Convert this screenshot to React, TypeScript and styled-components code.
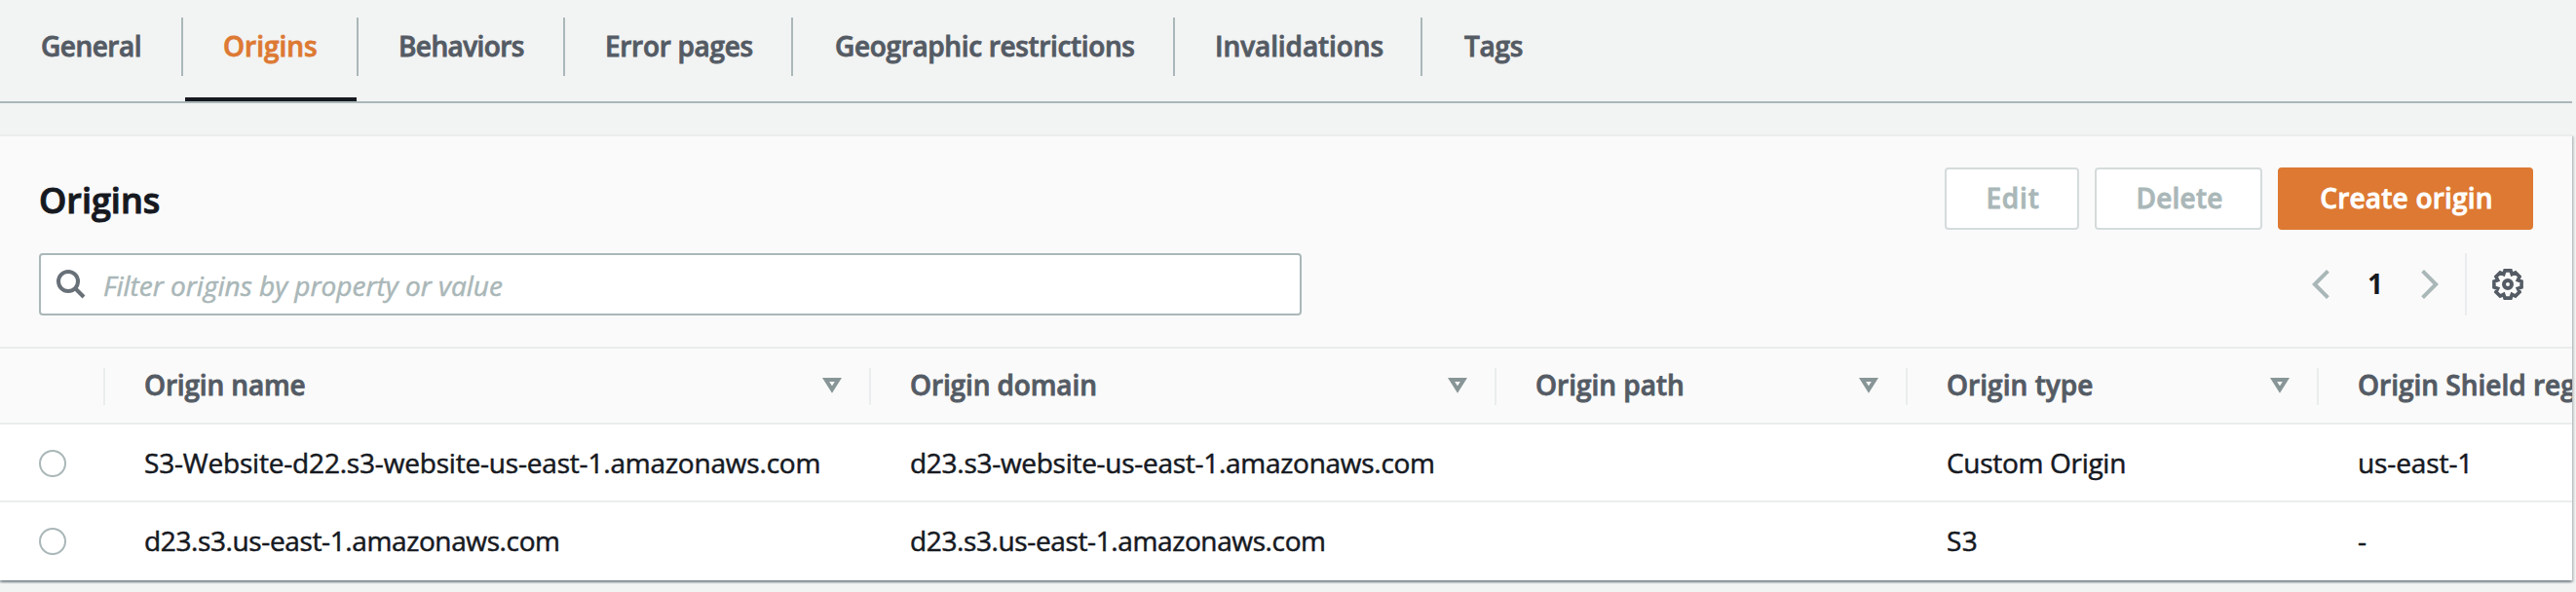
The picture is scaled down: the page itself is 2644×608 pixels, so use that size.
import React from 'react';
import styled, { createGlobalStyle } from 'styled-components';

const GlobalStyle = createGlobalStyle`
  * { box-sizing: border-box; }
  body {
    margin: 0;
    background: #f2f3f3;
    color: #16191f;
    font-family: "Open Sans", "Noto Sans", sans-serif;
    font-size: 28px;
    line-height: 40px;
    overflow: hidden;
  }
`;

const Page = styled.main`
  width: 2640px;
  height: 608px;
`;

const TabBar = styled.nav`
  display: flex;
  height: 106px;
  border-bottom: 2px solid #aab7b8;
`;

const Tab = styled.a<{ $width: number; $indent: number; $active?: boolean; $last?: boolean }>`
  position: relative;
  width: ${p => p.$width}px;
  padding: 27px 0 0 ${p => p.$indent}px;
  font-weight: 600;
  -webkit-text-stroke: 0.8px currentColor;
  white-space: nowrap;
  color: ${p => (p.$active ? '#dd7932' : '#545b64')};

  &::before {
    content: "";
    display: ${p => (p.$last ? 'none' : 'block')};
    position: absolute;
    top: 18px;
    right: 0;
    width: 2px;
    height: 60px;
    background: #aab7b8;
  }

  &::after {
    content: "";
    display: ${p => (p.$active ? 'block' : 'none')};
    position: absolute;
    left: 2px;
    right: 2px;
    bottom: 0;
    height: 4px;
    background: #16191f;
  }
`;

const Label = styled.span<{ $track?: number }>`
  letter-spacing: ${p => p.$track ?? 0}px;
`;

const Panel = styled.section`
  margin-top: 32px;
  height: 458px;
  border-top: 2px solid #eaeded;
  background: #fafafa;
  box-shadow:
    0 2px 2px 0 rgba(0, 28, 36, 0.3),
    2px 2px 2px 0 rgba(0, 28, 36, 0.15),
    -2px 2px 2px 0 rgba(0, 28, 36, 0.15);
`;

const PanelHeader = styled.header`
  display: flex;
  justify-content: space-between;
  align-items: center;
  padding: 32px 40px 0;
`;

const Title = styled.h2`
  margin: 0;
  padding-top: 3px;
  font-size: 36px;
  font-weight: 600;
  line-height: 48px;
  -webkit-text-stroke: 1px currentColor;
`;

const Actions = styled.div`
  display: flex;
  gap: 16px;
`;

const Button = styled.button<{ $width: number; $primary?: boolean }>`
  display: flex;
  justify-content: center;
  align-items: center;
  width: ${p => p.$width}px;
  height: 64px;
  padding: 0 0 2px 2px;
  border: 2px solid ${p => (p.$primary ? '#dd7932' : '#d5dbdb')};
  border-radius: 4px;
  background: ${p => (p.$primary ? '#dd7932' : '#ffffff')};
  color: ${p => (p.$primary ? '#ffffff' : '#aab7b8')};
  font: 600 28px/40px "Open Sans", "Noto Sans", sans-serif;
  -webkit-text-stroke: 0.8px currentColor;
`;

const Toolbar = styled.div`
  display: flex;
  justify-content: space-between;
  height: 120px;
  padding: 24px 40px 0;
`;

const SearchBox = styled.label`
  display: flex;
  align-items: center;
  width: 1296px;
  height: 64px;
  padding-left: 16px;
  border: 2px solid #aab7b8;
  border-radius: 4px;
  background: #ffffff;
`;

const Placeholder = styled.span`
  padding: 2px 0 0 18px;
  color: #aab7b8;
  font-style: italic;
  -webkit-text-stroke: 0.5px currentColor;
`;

const Pager = styled.div`
  display: flex;
  align-items: center;
  height: 64px;
`;

const PageNumber = styled.span`
  width: 94px;
  padding-bottom: 2px;
  text-align: center;
  font-weight: 700;
`;

const Settings = styled.div`
  display: flex;
  align-items: center;
  height: 64px;
  margin-left: 27px;
  padding: 0 10px 0 26px;
  border-left: 2px solid #eaeded;
`;

const Table = styled.div`
  overflow: hidden;
  border-top: 2px solid #eaeded;
`;

const Row = styled.div<{ $head?: boolean; $last?: boolean }>`
  display: grid;
  grid-template-columns: 108px 786px 642px 422px 422px 260px;
  align-items: center;
  height: ${p => (p.$head ? 78 : 80)}px;
  background: ${p => (p.$head ? '#fafafa' : '#ffffff')};
  box-shadow: ${p => (p.$last ? 'none' : 'inset 0 -2px 0 #eaeded')};
`;

const HeadCell = styled.div<{ $last?: boolean }>`
  display: flex;
  justify-content: space-between;
  align-items: center;
  height: 38px;
  padding: 0 28px 0 40px;
  border-right: ${p => (p.$last ? '0' : '2px')} solid #eaeded;
  color: #545b64;
  font-weight: 600;
  -webkit-text-stroke: 0.8px currentColor;
  white-space: nowrap;

  & > span { padding-bottom: 4px; }
  & > svg { margin-bottom: 2px; }
`;

const Cell = styled.div`
  padding: 0 0 2px 40px;
  white-space: nowrap;
  -webkit-text-stroke: 0.5px currentColor;
`;

const RadioCell = styled.div`
  padding-left: 40px;
`;

const Radio = styled.div`
  width: 28px;
  height: 28px;
  border: 2px solid #aab7b8;
  border-radius: 50%;
  background: #ffffff;
`;

const SearchIcon = () => (
  <svg width="30" height="30" viewBox="0 0 30 30" fill="none" stroke="#687078" strokeWidth="4">
    <circle cx="12" cy="12" r="10" />
    <path d="M19 19L28 28" />
  </svg>
);

const Chevron = ({ right }: { right?: boolean }) => (
  <svg width="18" height="30" viewBox="0 0 18 30" fill="none" stroke="#aab7b8" strokeWidth="4">
    <path d={right ? 'M1.6 1.4L15.2 15L1.6 28.6' : 'M16.4 1.4L2.8 15L16.4 28.6'} />
  </svg>
);

const SortIcon = () => (
  <svg width="20" height="16" viewBox="0 0 20 16" fill="none" stroke="#879596" strokeWidth="4">
    <path d="M3.6 2H16.4L10 12Z" />
  </svg>
);

// Eight teeth: each contributes a flat top and the valley that follows it.
const gearPath =
  Array.from({ length: 8 }, (_, i) =>
    [[-12, 14.4], [12, 14.4], [22.5, 11.2]].map(([deg, r]) => {
      const a = ((i * 45 + deg) * Math.PI) / 180;
      return `${(16 + r * Math.sin(a)).toFixed(2)} ${(16 - r * Math.cos(a)).toFixed(2)}`;
    })
  )
    .flat()
    .map((p, i) => (i ? 'L' : 'M') + p)
    .join('') + 'Z';

const GearIcon = () => (
  <svg width="32" height="32" viewBox="0 0 32 32" fill="none" stroke="#545b64">
    <path d={gearPath} strokeWidth="3.6" />
    <circle cx="16" cy="16" r="4" strokeWidth="4" />
  </svg>
);

const tabs = [
  { text: 'General', width: 188, indent: 42, track: -0.5 },
  { text: 'Origins', width: 180, indent: 41, track: 0 },
  { text: 'Behaviors', width: 212, indent: 41, track: -0.6 },
  { text: 'Error pages', width: 234, indent: 41, track: -0.3 },
  { text: 'Geographic restrictions', width: 392, indent: 43, track: -0.35 },
  { text: 'Invalidations', width: 254, indent: 41, track: -0.1 },
  { text: 'Tags', width: 150, indent: 43, track: -0.3 },
];

const columns = [
  { text: 'Origin name', track: -0.15 },
  { text: 'Origin domain', track: -0.12 },
  { text: 'Origin path', track: 0 },
  { text: 'Origin type', track: 0.05 },
  { text: 'Origin Shield region', track: 0 },
];

const rows = [
  [
    { text: 'S3-Website-d22.s3-website-us-east-1.amazonaws.com', track: -0.19 },
    { text: 'd23.s3-website-us-east-1.amazonaws.com', track: -0.28 },
    { text: '', track: 0 },
    { text: 'Custom Origin', track: -0.3 },
    { text: 'us-east-1', track: -0.1 },
  ],
  [
    { text: 'd23.s3.us-east-1.amazonaws.com', track: -0.38 },
    { text: 'd23.s3.us-east-1.amazonaws.com', track: -0.38 },
    { text: '', track: 0 },
    { text: 'S3', track: 0.5 },
    { text: '-', track: 0 },
  ],
];

export default function App() {
  return (
    <>
      <GlobalStyle />
      <Page>
        <TabBar>
          {tabs.map((t, i) => (
            <Tab
              key={t.text}
              $width={t.width}
              $indent={t.indent}
              $active={t.text === 'Origins'}
              $last={i === tabs.length - 1}
            >
              <Label $track={t.track}>{t.text}</Label>
            </Tab>
          ))}
        </TabBar>
        <Panel>
          <PanelHeader>
            <Title><Label $track={0}>Origins</Label></Title>
            <Actions>
              <Button $width={138}><Label $track={0.8}>Edit</Label></Button>
              <Button $width={172}><Label $track={0.2}>Delete</Label></Button>
              <Button $width={262} $primary><Label $track={0.2}>Create origin</Label></Button>
            </Actions>
          </PanelHeader>
          <Toolbar>
            <SearchBox>
              <SearchIcon />
              <Placeholder>Filter origins by property or value</Placeholder>
            </SearchBox>
            <Pager>
              <Chevron />
              <PageNumber>1</PageNumber>
              <Chevron right />
              <Settings><GearIcon /></Settings>
            </Pager>
          </Toolbar>
          <Table>
            <Row $head>
              <HeadCell />
              {columns.map((c, i) => (
                <HeadCell key={c.text} $last={i === columns.length - 1}>
                  <Label $track={c.track}>{c.text}</Label>
                  {i < columns.length - 1 && <SortIcon />}
                </HeadCell>
              ))}
            </Row>
            {rows.map((cells, r) => (
              <Row key={r} $last={r === rows.length - 1}>
                <RadioCell><Radio /></RadioCell>
                {cells.map((c, i) => (
                  <Cell key={i}><Label $track={c.track}>{c.text}</Label></Cell>
                ))}
              </Row>
            ))}
          </Table>
        </Panel>
      </Page>
    </>
  );
}
